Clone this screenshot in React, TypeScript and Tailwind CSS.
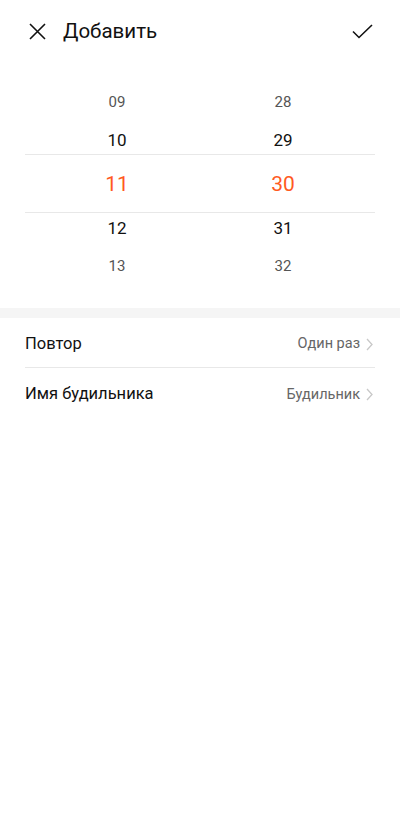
import React from 'react'

const hours = ['09', '10', '11', '12', '13']
const mins = ['28', '29', '30', '31', '32']

function Column({ items }: { items: string[] }) {
  return (
    <div className="w-[166px] flex flex-col items-center">
      <div className="h-[38px] flex items-center text-[15px] text-[#555]">{items[0]}</div>
      <div className="h-[33px] flex items-end pb-[1px] text-[17px] text-[#111]">{items[1]}</div>
      <div className="h-[58px] flex items-center pt-[3px] text-[21px] text-[#ff5a1f]">{items[2]}</div>
      <div className="h-[33px] flex items-start pt-[4px] text-[17px] text-[#111]">{items[3]}</div>
      <div className="h-[42px] flex items-center text-[15px] text-[#555]">{items[4]}</div>
    </div>
  )
}

function Row({ label, value, last }: { label: string; value: string; last?: boolean }) {
  return (
    <div className={`ml-[25px] mr-[25px] pr-[2px] pt-[3px] h-[50px] flex items-center justify-between ${last ? '' : 'border-b border-[#e8e8e8]'}`}>
      <span className="text-[16.5px] text-[#111]">{label}</span>
      <div className="flex items-center gap-[6px]">
        <span className="text-[14.5px] text-[#666]">{value}</span>
        <svg width="7" height="13" viewBox="0 0 7 13" fill="none">
          <path d="M1 1l5 5.5L1 12" stroke="#c8c8c8" strokeWidth="1.3" />
        </svg>
      </div>
    </div>
  )
}

export default function App() {
  return (
    <div className="w-[400px] h-[814px] bg-white font-['Roboto',sans-serif]">
      <div className="h-[60px] pt-[2px] flex items-center pl-[29px] pr-[27px]">
        <svg width="17" height="17" viewBox="0 0 17 17" fill="none">
          <path d="M1 1l15 15M16 1L1 16" stroke="#111" strokeWidth="1.6" />
        </svg>
        <span className="ml-[17px] text-[20.5px] text-[#111]">Добавить</span>
        <svg className="ml-auto" width="21" height="15" viewBox="0 0 21 15" fill="none">
          <path d="M1 7.5l6 6L20 1" stroke="#111" strokeWidth="1.6" />
        </svg>
      </div>

      <div className="relative mt-[23px]">
        <div className="absolute left-[25px] right-[25px] top-[71px] h-px bg-[#e8e8e8]" />
        <div className="absolute left-[25px] right-[25px] top-[129px] h-px bg-[#e8e8e8]" />
        <div className="flex justify-center">
          <Column items={hours} />
          <Column items={mins} />
        </div>
      </div>

      <div className="mt-[21px] h-[10px] bg-[#f5f5f5]" />

      <Row label="Повтор" value="Один раз" />
      <Row label="Имя будильника" value="Будильник" last />
    </div>
  )
}
